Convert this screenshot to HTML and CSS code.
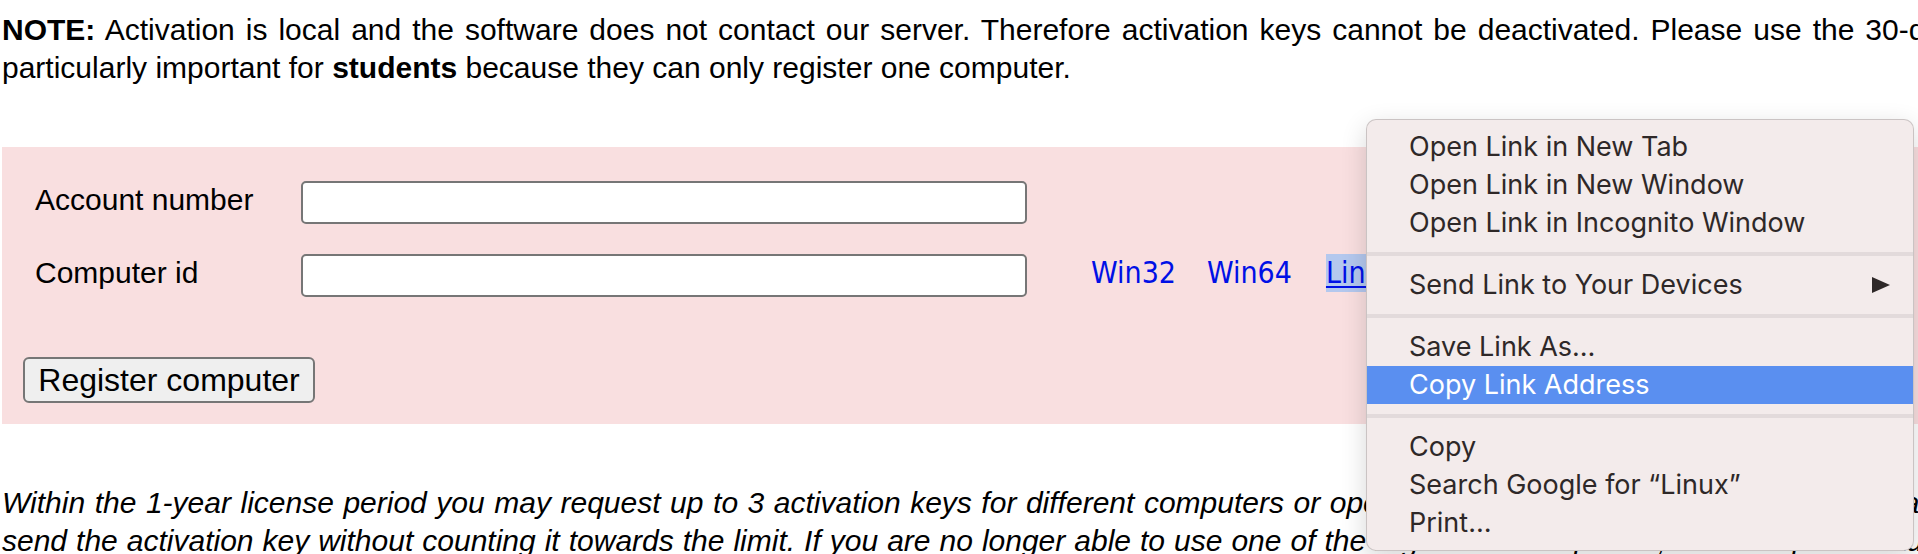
FILE: index.html
```html
<!DOCTYPE html>
<html>
<head>
<meta charset="utf-8">
<title>Register computer</title>
<link rel="stylesheet" href="styles.css">
</head>
<body>
<div class="page">
  <p class="note"><b>NOTE:</b> Activation is local and the software does not contact our server. Therefore activation keys cannot be deactivated. Please use the 30-day trial version to test the software on your computer first. This is particularly important for <b>students</b> because they can only register one computer.</p>

  <form class="panel">
    <div class="row">
      <label class="lbl">Account number</label>
      <input class="field" type="text">
    </div>
    <div class="row">
      <label class="lbl">Computer id</label>
      <input class="field" type="text">
      <div class="links">
        <a class="link" href="#">Win32</a>
        <a class="link" href="#">Win64</a>
        <a class="link sel" href="#">Linux</a>
        <a class="link" href="#">Mac</a>
      </div>
    </div>
    <button class="btn" type="button">Register computer</button>
  </form>

  <p class="info">Within the 1-year license period you may request up to 3 activation keys for different computers or operating systems. If you completely reinstall the operating system or replace the hard drive, we will be glad to send the activation key without counting it towards the limit. If you are no longer able to use one of the registered computers, for example because it was stolen or damaged, please contact us by mail and we will reset your activation.</p>
</div>

<div class="menu">
  <div class="item">Open Link in New Tab</div>
  <div class="item">Open Link in New Window</div>
  <div class="item">Open Link in Incognito Window</div>
  <div class="sep"></div>
  <div class="item"><span>Send Link to Your Devices</span><svg class="arrow" width="18" height="16" viewBox="0 0 18 16"><polygon points="0,0 18,8 0,16"/></svg></div>
  <div class="sep"></div>
  <div class="item">Save Link As…</div>
  <div class="item active">Copy Link Address</div>
  <div class="sep"></div>
  <div class="item">Copy</div>
  <div class="item">Search Google for “Linux”</div>
  <div class="item">Print…</div>
</div>
</body>
</html>
```

FILE: styles.css
```css
html, body {
  margin: 0;
  padding: 0;
  background: #ffffff;
  overflow: hidden;
}

body {
  position: relative;
  width: 1918px;
  height: 554px;
  font-family: "Liberation Sans", Arial, Helvetica, sans-serif;
  color: #000;
}

.page {
  width: 2812px;
  padding: 11px 0 0 2px;
}

.note {
  margin: 0;
  font-size: 30px;
  line-height: 38px;
  text-align: justify;
}

.panel {
  margin: 60px 0 0 0;
  background: #f9dfe0;
  padding: 34px 0 21px 0;
  display: flex;
  flex-direction: column;
  align-items: flex-start;
}

.row {
  display: flex;
  align-items: center;
  height: 43px;
}

.row + .row {
  margin-top: 30px;
}

.lbl {
  width: 266px;
  padding-left: 33px;
  margin-bottom: 5px;
  font-size: 30px;
  line-height: 34px;
}

.field {
  width: 726px;
  height: 43px;
  box-sizing: border-box;
  margin: 0;
  padding: 0 8px;
  border: 2px solid #767676;
  border-radius: 5px;
  background: #fff;
  font-size: 26px;
}

.links {
  display: flex;
  gap: 31px;
  margin-left: 64px;
  margin-bottom: 5px;
  font-family: "DejaVu Sans Condensed", "DejaVu Sans", sans-serif;
  font-size: 30px;
}

.link {
  color: #0010e6;
  text-decoration: none;
  line-height: 38px;
}

.link.sel {
  margin-left: 3px;
  background: #b4c8ee;
  text-decoration: underline;
  text-decoration-thickness: 2px;
  text-underline-offset: 3px;
}

.btn {
  margin: 60px 0 0 21px;
  width: 292px;
  height: 46px;
  box-sizing: border-box;
  padding: 0;
  border: 2px solid #767676;
  border-radius: 6px;
  background: #efefef;
  color: #000;
  font-family: "Liberation Sans", Arial, sans-serif;
  font-size: 32px;
}

.info {
  margin: 60px 0 0 0;
  font-size: 30px;
  line-height: 38px;
  font-style: italic;
  text-align: justify;
}

/* context menu overlay */
.menu {
  position: absolute;
  left: 1366px;
  top: 119px;
  width: 548px;
  box-sizing: border-box;
  padding: 8px 0;
  border: 1px solid rgba(0, 0, 0, 0.17);
  border-radius: 10px;
  background: #f3ebeb;
  box-shadow: 0 8px 26px rgba(0, 0, 0, 0.16);
  font-family: Inter, "Noto Sans", sans-serif;
  font-size: 27px;
  color: #2e2828;
}

.item {
  display: flex;
  align-items: center;
  justify-content: space-between;
  height: 38px;
  line-height: 38px;
  padding: 0 23px 0 42px;
  white-space: nowrap;
}

.item.active {
  background: #5a8ff0;
  color: #ffffff;
}

.arrow {
  fill: #2e2828;
}

.sep {
  height: 24px;
  display: flex;
  align-items: center;
}

.sep::before {
  content: "";
  flex: 1;
  height: 4px;
  background: #e2dadb;
}
```
